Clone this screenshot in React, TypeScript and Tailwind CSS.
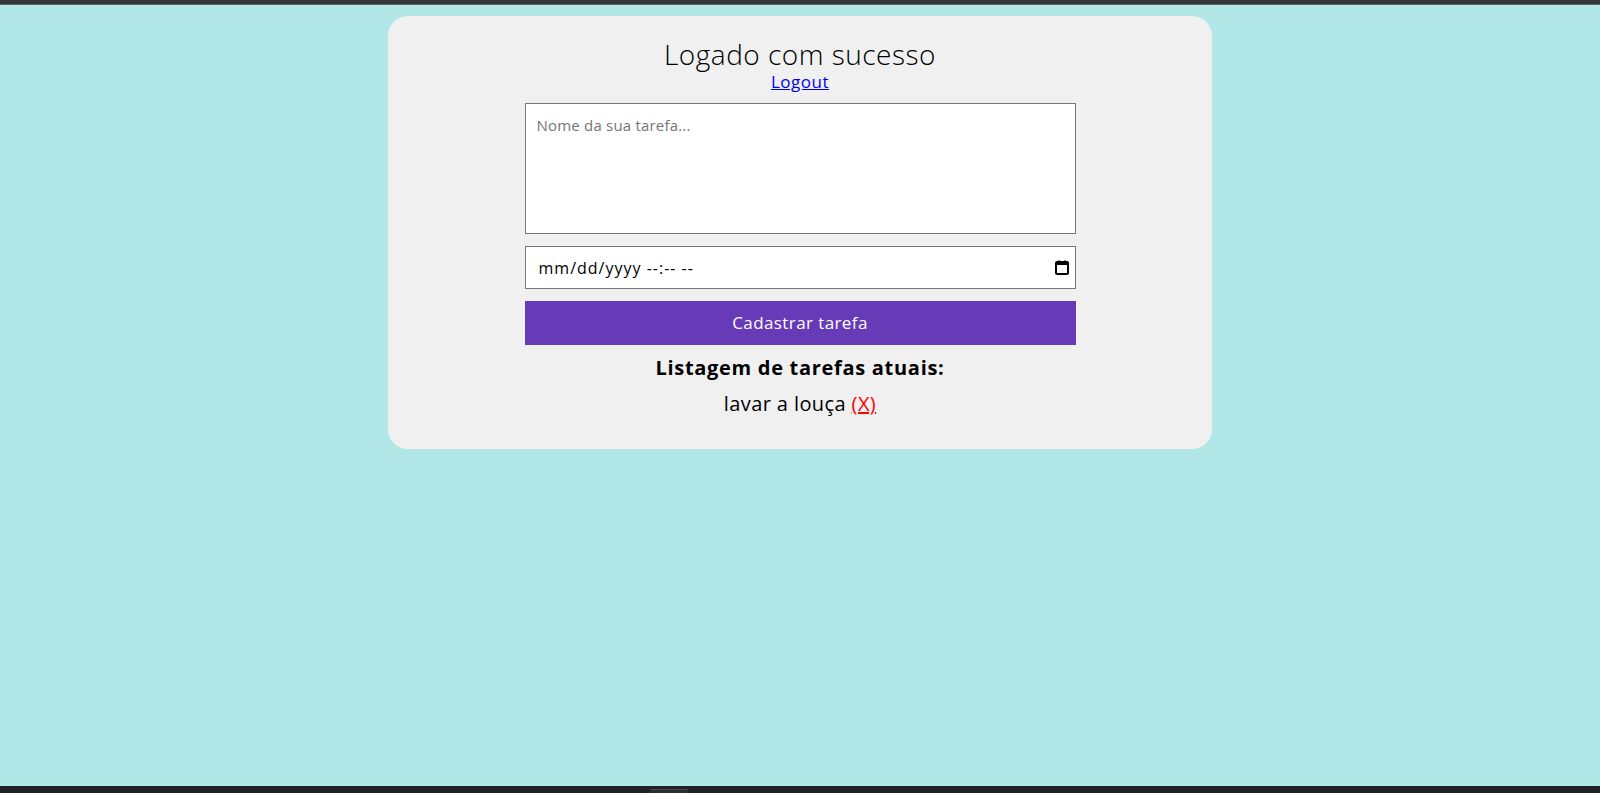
import React from "react";

const font = { fontFamily: '"Open Sans", "Noto Sans", sans-serif' };

function CalendarIcon() {
  return (
    <svg width="14" height="15" viewBox="0 0 14 15" fill="none">
      <rect x="1" y="2" width="12" height="12" rx="1" stroke="#000" strokeWidth="2" />
      <rect x="1" y="2" width="12" height="3" fill="#000" />
      <rect x="3" y="0.5" width="2" height="2.5" fill="#000" />
      <rect x="9" y="0.5" width="2" height="2.5" fill="#000" />
    </svg>
  );
}

export default function App() {
  return (
    <div className="h-[793px] flex flex-col overflow-hidden" style={font}>
      {/* Browser chrome top */}
      <div className="h-[5px] bg-[#35363a] border-b border-[#5f6368]" />

      <main className="flex-1 bg-[#b2e7e7] pt-[11px]">
        <div className="mx-auto w-[824px] rounded-[20px] bg-[#f0f0f0] flex flex-col items-center pt-[23px] pb-[33px] text-black">
          {/* Header */}
          <h1 className="text-[28px] leading-[30px] font-light tracking-[0.5px]">Logado com sucesso</h1>
          <a href="#" className="mt-[3px] text-[17px] leading-[20px] tracking-[0.5px] text-[#0000ee] underline">
            Logout
          </a>

          {/* Form */}
          <textarea
            placeholder="Nome da sua tarefa..."
            className="mt-[11px] w-[551px] h-[131px] bg-white border border-[#767676] px-[11px] py-[12px] text-[15px] leading-[18px] tracking-[0.2px] resize-none outline-none placeholder:text-[#757575]"
          />
          <div className="mt-[12px] w-[551px] h-[43px] bg-white border border-[#767676] flex items-center justify-between pl-[13px] pr-[6px] text-[16px] tracking-[1px]">
            <span>mm/dd/yyyy --:-- --</span>
            <CalendarIcon />
          </div>
          <button className="mt-[12px] w-[551px] h-[44px] bg-[#673ab7] text-white text-[17px] tracking-[0.4px]">
            Cadastrar tarefa
          </button>

          {/* Task list */}
          <h2 className="mt-[11px] text-[20px] leading-[24px] font-bold tracking-[0.7px]">Listagem de tarefas atuais:</h2>
          <p className="mt-[12px] text-[20px] leading-[24px] tracking-[0.4px]">
            lavar a louça{" "}
            <a href="#" className="text-[#ff0000] underline">(X)</a>
          </p>
        </div>
      </main>

      {/* Browser chrome bottom */}
      <div className="h-[7px] bg-[#202124] relative">
        <div className="absolute left-[650px] top-[3px] w-[38px] h-[4px] bg-[#2c2d30] rounded-t-[2px] border-t border-[#4a4b4e]" />
      </div>
    </div>
  );
}
